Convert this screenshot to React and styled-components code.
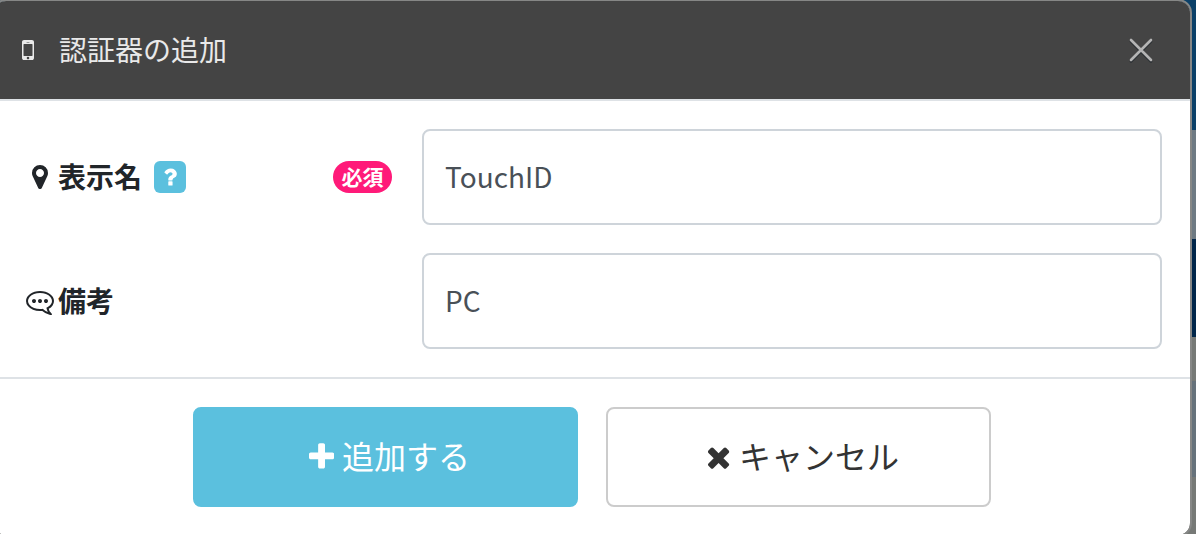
import React, { useState } from 'react';
import styled, { createGlobalStyle, css } from 'styled-components';

const GlobalStyle = createGlobalStyle`
    * {
        box-sizing: border-box;
    }

    body {
        margin: 0;
        overflow: hidden;
    }

    body, input, button {
        font-family: "Noto Sans CJK JP", "Noto Sans", sans-serif;
        font-size: 28px;
        line-height: 42px;
    }
`;

/* dimmed page that shows behind the dialog */
const Backdrop = styled.div`
    background: linear-gradient(
        #0b4068 0 130px,
        #6e7a83 130px 239px,
        #00264a 239px 337px,
        #767976 337px 381px,
        #66727b 381px 477px,
        #767976 477px
    );
    display: flow-root;
    height: 100vh;
    overflow: hidden;
`;

const Dialog = styled.form`
    background: #ffffff;
    background-clip: padding-box;
    border: 2px solid #868786;
    border-radius: 14px;
    color: #212529;
    margin: -1px 4px 0 -8px;
    overflow: hidden;
`;

const Header = styled.header`
    align-items: center;
    background: #444444;
    border-bottom: 2px solid #dee2e6;
    color: #e9e9e9;
    display: flex;
    height: 100px;
    padding: 0 36px 0 28px;
`;

const Title = styled.h1`
    flex: 1;
    font-size: 28px;
    font-weight: 400;
    margin: 0 0 0 25px;
    padding-bottom: 2px;
`;

const CloseButton = styled.button`
    background: none;
    border: 0;
    color: #b4b4b4;
    cursor: pointer;
    display: flex;
    padding: 0;
`;

const Body = styled.div`
    display: grid;
    gap: 28px;
    padding: 28px;
`;

const Field = styled.div`
    align-items: center;
    display: grid;
    gap: 30px;
    grid-template-columns: 1fr 2fr;
`;

const LabelCell = styled.div`
    align-items: center;
    display: flex;
`;

const Label = styled.label`
    align-items: center;
    display: flex;
    font-weight: 700;
`;

const LabelIcon = styled.span`
    display: flex;
    justify-content: center;
    width: 36px;
`;

const Caption = styled.span`
    padding-bottom: ${props => props.$large ? '4px' : '2px'};
`;

const HelpButton = styled.button`
    align-items: center;
    background: #5bc0de;
    border: 0;
    border-radius: 6px;
    color: #ffffff;
    cursor: pointer;
    display: flex;
    height: 32px;
    justify-content: center;
    margin-left: 12px;
    padding: 0;
    width: 32px;
`;

const Badge = styled.span`
    background: #ff1a79;
    border-radius: 16px;
    color: #ffffff;
    font-size: 21px;
    font-weight: 700;
    height: 32px;
    line-height: 30px;
    margin-left: auto;
    min-width: 59px;
    text-align: center;
`;

const TextInput = styled.input`
    border: 2px solid #ced4da;
    border-radius: 8px;
    color: #495057;
    height: 96px;
    outline: 0;
    padding: 0 21px 2px;
    width: 100%;
`;

const Footer = styled.footer`
    border-top: 2px solid #dee2e6;
    display: flex;
    gap: 28px;
    justify-content: center;
    padding: 28px;
`;

const Button = styled.button`
    align-items: center;
    background: #ffffff;
    border: 2px solid #cccccc;
    border-radius: 8px;
    color: #333333;
    cursor: pointer;
    display: flex;
    flex: 0 1 385px;
    font-size: 32px;
    gap: 8px;
    height: 100px;
    justify-content: center;
    padding: 0 0 0 8px;

    ${props => props.$primary &&
        css`
            background: #5bc0de;
            border-color: #5bc0de;
            color: #ffffff;
        `};
`;

const Svg = styled.svg`
    display: block;
    fill: currentColor;
    flex: none;
`;

const icons = {
    mobile: {
        box: '512 0 768 1792',
        d: 'M976 1408q0-33-23.5-56.5t-56.5-23.5-56.5 23.5-23.5 56.5 23.5 56.5 56.5 23.5 56.5-23.5 23.5-56.5zm208-160v-704q0-13-9.5-22.5t-22.5-9.5h-512q-13 0-22.5 9.5t-9.5 22.5v704q0 13 9.5 22.5t22.5 9.5h512q13 0 22.5-9.5t9.5-22.5zm-192-848q0-16-16-16h-160q-16 0-16 16t16 16h160q16 0 16-16zm288-16v1024q0 52-38 90t-90 38h-512q-52 0-90-38t-38-90v-1024q0-52 38-90t90-38h512q52 0 90 38t38 90z'
    },
    marker: {
        d: 'M1152 640q0-106-75-181t-181-75-181 75-75 181 75 181 181 75 181-75 75-181zm256 0q0 109-33 179l-364 774q-16 33-47.5 52t-67.5 19-67.5-19-46.5-52l-365-774q-33-70-33-179 0-212 150-362t362-150 362 150 150 362z'
    },
    comment: {
        flip: true,
        d: 'M640 896q0 53-37.5 90.5t-90.5 37.5-90.5-37.5-37.5-90.5 37.5-90.5 90.5-37.5 90.5 37.5 37.5 90.5zm384 0q0 53-37.5 90.5t-90.5 37.5-90.5-37.5-37.5-90.5 37.5-90.5 90.5-37.5 90.5 37.5 37.5 90.5zm384 0q0 53-37.5 90.5t-90.5 37.5-90.5-37.5-37.5-90.5 37.5-90.5 90.5-37.5 90.5 37.5 37.5 90.5zm-512-512q-204 0-381.5 69.5t-282 187.5-104.5 255q0 112 71.5 213.5t201.5 175.5l87 50-27 96q-24 91-70 172 152-63 275-171l43-38 57 6q69 8 130 8 204 0 381.5-69.5t282-187.5 104.5-255-104.5-255-282-187.5-381.5-69.5zm896 512q0 174-120 321.5t-326 233-450 85.5q-70 0-145-8-198 175-460 242-49 14-114 22h-5q-15 0-27-10.5t-16-27.5v-1q-3-4-.5-12t2-10 4.5-9.5l6-9 7-8.5 8-9q7-8 31-34.5t34.5-38 31-39.5 32.5-51 27-59 26-76q-157-89-247.5-220t-90.5-281q0-130 71-248.5t191-204.5 286-136.5 348-50.5 348 50.5 286 136.5 191 204.5 71 248.5z'
    },
    question: {
        d: 'M1088 1256v240q0 16-12 28t-28 12h-240q-16 0-28-12t-12-28v-240q0-16 12-28t28-12h240q16 0 28 12t12 28zm316-600q0 54-15.5 101t-35 76.5-55 59.5-57.5 43.5-61 35.5q-41 23-68.5 65t-27.5 67q0 17-12 32.5t-28 15.5h-240q-15 0-25.5-18.5t-10.5-37.5v-45q0-83 65-156.5t143-108.5q59-27 84-56t25-76q0-42-46.5-74t-107.5-32q-65 0-108 29-35 25-107 115-13 16-31 16-12 0-25-8l-164-125q-13-10-15.5-25t5.5-28q160-266 464-266 80 0 161 31t146 83 106 127.5 41 158.5z'
    },
    plus: {
        box: '192 0 1408 1792',
        d: 'M1600 736v192q0 40-28 68t-68 28h-416v416q0 40-28 68t-68 28h-192q-40 0-68-28t-28-68v-416h-416q-40 0-68-28t-28-68v-192q0-40 28-68t68-28h416v-416q0-40 28-68t68-28h192q40 0 68 28t28 68v416h416q40 0 68 28t28 68z'
    },
    times: {
        box: '192 0 1408 1792',
        d: 'M1490 1322q0 40-28 68l-136 136q-28 28-68 28t-68-28l-294-294-294 294q-28 28-68 28t-68-28l-136-136q-28-28-28-68t28-68l294-294-294-294q-28-28-28-68t28-68l136-136q28-28 68-28t68 28l294 294 294-294q28-28 68-28t68 28l136 136q28 28 28 68t-28 68l-294 294 294 294q28 28 28 68z'
    }
};

const Icon = ({ name, size }) => {
    const { box = '0 0 1792 1792', flip, d } = icons[name];
    return (
        <Svg viewBox={box} height={size} aria-hidden="true">
            <path d={d} transform={flip ? 'translate(1792 0) scale(-1 1)' : undefined} />
        </Svg>
    )
}

const CloseIcon = () => (
    <Svg viewBox="0 0 26 26" width="26" height="26" aria-hidden="true">
        <path d="M3 4.5l20 20M23 4.5l-20 20" stroke="#2c3034" strokeWidth="2.6" strokeLinecap="round" />
        <path d="M3 3l20 20M23 3l-20 20" stroke="currentColor" strokeWidth="2.6" strokeLinecap="round" />
    </Svg>
)

const App = () => {
    const [name, setName] = useState('TouchID');
    const [note, setNote] = useState('PC');

    return (
        <Backdrop>
            <GlobalStyle />
            <Dialog onSubmit={e => e.preventDefault()}>
                <Header>
                    <Icon name="mobile" size={28} />
                    <Title>認証器の追加</Title>
                    <CloseButton type="button" aria-label="閉じる">
                        <CloseIcon />
                    </CloseButton>
                </Header>
                <Body>
                    <Field>
                        <LabelCell>
                            <Label htmlFor="name">
                                <LabelIcon><Icon name="marker" size={28} /></LabelIcon>
                                <Caption>表示名</Caption>
                            </Label>
                            <HelpButton type="button" aria-label="ヘルプ">
                                <Icon name="question" size={24} />
                            </HelpButton>
                            <Badge>必須</Badge>
                        </LabelCell>
                        <TextInput
                            id="name"
                            type="text"
                            value={name}
                            onChange={e => setName(e.target.value)}
                        />
                    </Field>
                    <Field>
                        <LabelCell>
                            <Label htmlFor="note">
                                <LabelIcon><Icon name="comment" size={28} /></LabelIcon>
                                <Caption>備考</Caption>
                            </Label>
                        </LabelCell>
                        <TextInput
                            id="note"
                            type="text"
                            value={note}
                            onChange={e => setNote(e.target.value)}
                        />
                    </Field>
                </Body>
                <Footer>
                    <Button type="submit" $primary>
                        <Icon name="plus" size={32} />
                        <Caption $large>追加する</Caption>
                    </Button>
                    <Button type="button">
                        <Icon name="times" size={32} />
                        <Caption $large>キャンセル</Caption>
                    </Button>
                </Footer>
            </Dialog>
        </Backdrop>
    )
}

export default App;
